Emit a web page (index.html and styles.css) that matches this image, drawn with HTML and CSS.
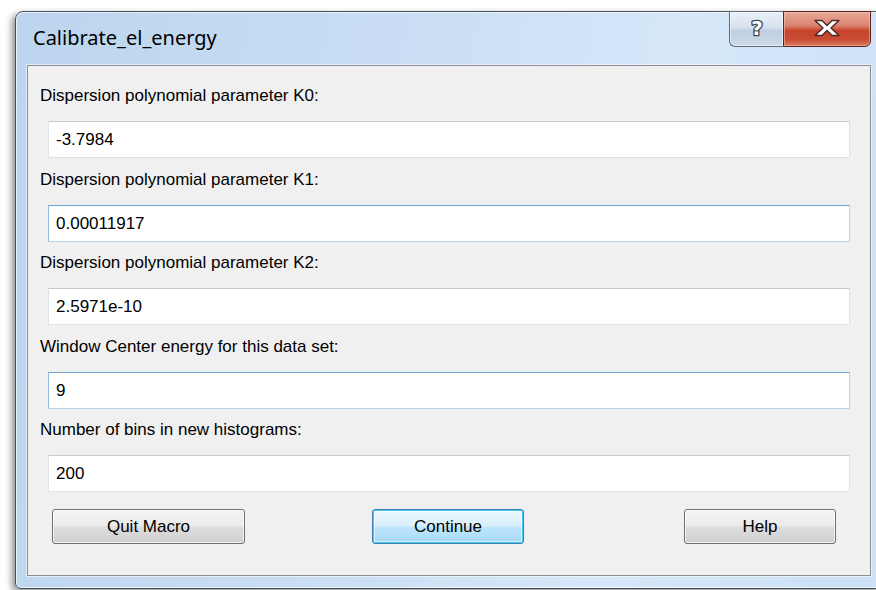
FILE: index.html
```html
<!DOCTYPE html>
<html lang="en">
<head>
<meta charset="utf-8">
<title>Calibrate_el_energy</title>
<link rel="stylesheet" href="styles.css">
</head>
<body>
<div class="window">
  <div class="titlebar">
    <div class="title">Calibrate_el_energy</div>
    <div class="caption-buttons">
      <div class="cap-btn cap-help">
        <svg width="20" height="22" viewBox="0 0 20 22" aria-hidden="true">
          <text x="10" y="18" text-anchor="middle" class="qmark">?</text>
        </svg>
      </div>
      <div class="cap-btn cap-close">
        <svg width="28" height="18" viewBox="0 0 28 18" aria-hidden="true">
          <path d="M2 1.5h7l5 5 5-5h7l-8 7.5 8 7.5h-7l-5-5-5 5H2l8-7.5z" fill="#fff" stroke="#4a2a26" stroke-width="1.4" stroke-linejoin="round"/>
        </svg>
      </div>
    </div>
  </div>
  <div class="client">
    <div class="field">
      <div class="label">Dispersion polynomial parameter K0:</div>
      <div class="input">-3.7984</div>
    </div>
    <div class="field">
      <div class="label">Dispersion polynomial parameter K1:</div>
      <div class="input focus">0.00011917</div>
    </div>
    <div class="field">
      <div class="label">Dispersion polynomial parameter K2:</div>
      <div class="input">2.5971e-10</div>
    </div>
    <div class="field">
      <div class="label">Window Center energy for this data set:</div>
      <div class="input focus">9</div>
    </div>
    <div class="field">
      <div class="label">Number of bins in new histograms:</div>
      <div class="input">200</div>
    </div>
    <div class="buttons">
      <div class="btn btn-quit">Quit Macro</div>
      <div class="btn btn-continue default">Continue</div>
      <div class="btn btn-help">Help</div>
    </div>
  </div>
</div>
</body>
</html>
```

FILE: styles.css
```css
html, body {
  margin: 0;
  padding: 0;
}

body {
  width: 876px;
  height: 590px;
  overflow: hidden;
  background: #ffffff;
  font-family: "Liberation Sans", Arial, sans-serif;
  font-size: 17px;
  color: #000;
}

/* Aero dialog frame */
.window {
  margin: 11px 0 0 15px;
  width: 868px;
  height: 578px;
  box-sizing: border-box;
  border: 1px solid #46505c;
  border-radius: 8px 8px 6px 6px;
  background: linear-gradient(100deg, #bcd4ee 0%, #c9def4 40%, #d6e7f9 70%, #cbe0f6 100%);
  box-shadow: -3px 3px 7px rgba(0, 0, 0, 0.45), inset 0 0 0 1px rgba(255, 255, 255, 0.65);
  padding: 0 11px 12px 11px;
  display: flex;
  flex-direction: column;
}

.titlebar {
  height: 53px;
  display: flex;
  align-items: flex-start;
  flex-shrink: 0;
}

.title {
  font-family: "Noto Sans", "Open Sans", sans-serif;
  font-size: 20px;
  line-height: 26px;
  padding: 13px 0 0 6px;
  color: #000;
}

.caption-buttons {
  margin-left: auto;
  margin-top: -1px;
  display: flex;
}

.cap-btn {
  height: 36px;
  box-sizing: border-box;
  display: flex;
  align-items: center;
  justify-content: center;
}

.cap-help {
  width: 54px;
  border: 1px solid #5f6b7a;
  border-right: none;
  border-radius: 0 0 0 6px;
  background: linear-gradient(to bottom, #e9f0f8 0%, #d7e2ee 45%, #c0cfe0 55%, #cbd9e8 100%);
  box-shadow: inset 0 0 0 1px rgba(255, 255, 255, 0.55);
}

.cap-help svg {
  margin-top: -3px;
}

.qmark {
  font-family: "DejaVu Sans", sans-serif;
  font-weight: bold;
  font-size: 20px;
  fill: #ffffff;
  stroke: #3b4450;
  stroke-width: 2.6px;
  stroke-linejoin: round;
  paint-order: stroke fill;
}

.cap-close {
  width: 88px;
  border: 1px solid #5a2620;
  border-radius: 0 0 6px 0;
  background: linear-gradient(to bottom, #e9a999 0%, #d98470 40%, #c8432c 55%, #c94b33 80%, #dc7a5e 100%);
  box-shadow: inset 0 0 0 1px rgba(255, 210, 200, 0.45);
}

.cap-close svg {
  margin-top: -3px;
}

/* Dialog body */
.client {
  flex: 1;
  border: 1px solid #8b8f94;
  background: #f0f0f0;
  padding: 20px 20px 0 12px;
  box-shadow: 0 0 0 1px rgba(255, 255, 255, 0.55);
}

.field {
  margin-bottom: 11.5px;
}

.label {
  line-height: 20px;
  height: 20px;
  margin-bottom: 15px;
  white-space: nowrap;
}

.input {
  margin-left: 8px;
  height: 37px;
  box-sizing: border-box;
  background: #fff;
  border: 1px solid #dfe3e8;
  border-top-color: #c6cacf;
  padding: 0 7px;
  line-height: 35px;
}

.input.focus {
  border-color: #b7d3ec;
  border-top-color: #6fa1d1;
  border-left-color: #8fb8de;
}

.buttons {
  display: flex;
  padding-top: 5.5px;
}

.btn {
  height: 35px;
  box-sizing: border-box;
  border: 1px solid #707070;
  border-radius: 3px;
  background: linear-gradient(to bottom, #f3f3f3 0%, #ebebeb 48%, #dddddd 52%, #d0d0d0 100%);
  box-shadow: inset 0 0 0 1px rgba(255, 255, 255, 0.7);
  display: flex;
  align-items: center;
  justify-content: center;
  line-height: 20px;
}

.btn-quit {
  width: 193px;
  margin-left: 12px;
}

.btn-continue {
  width: 152px;
  margin-left: 127px;
}

.btn-help {
  width: 152px;
  margin-left: 160px;
}

.btn.default {
  border-color: #3c7fb1;
  background: linear-gradient(to bottom, #eaf6fd 0%, #d9f0fc 48%, #bee6fd 52%, #a7d9f5 100%);
  box-shadow: inset 0 0 0 1px #48c6f5, inset 0 0 0 2px rgba(255, 255, 255, 0.5);
}
```
